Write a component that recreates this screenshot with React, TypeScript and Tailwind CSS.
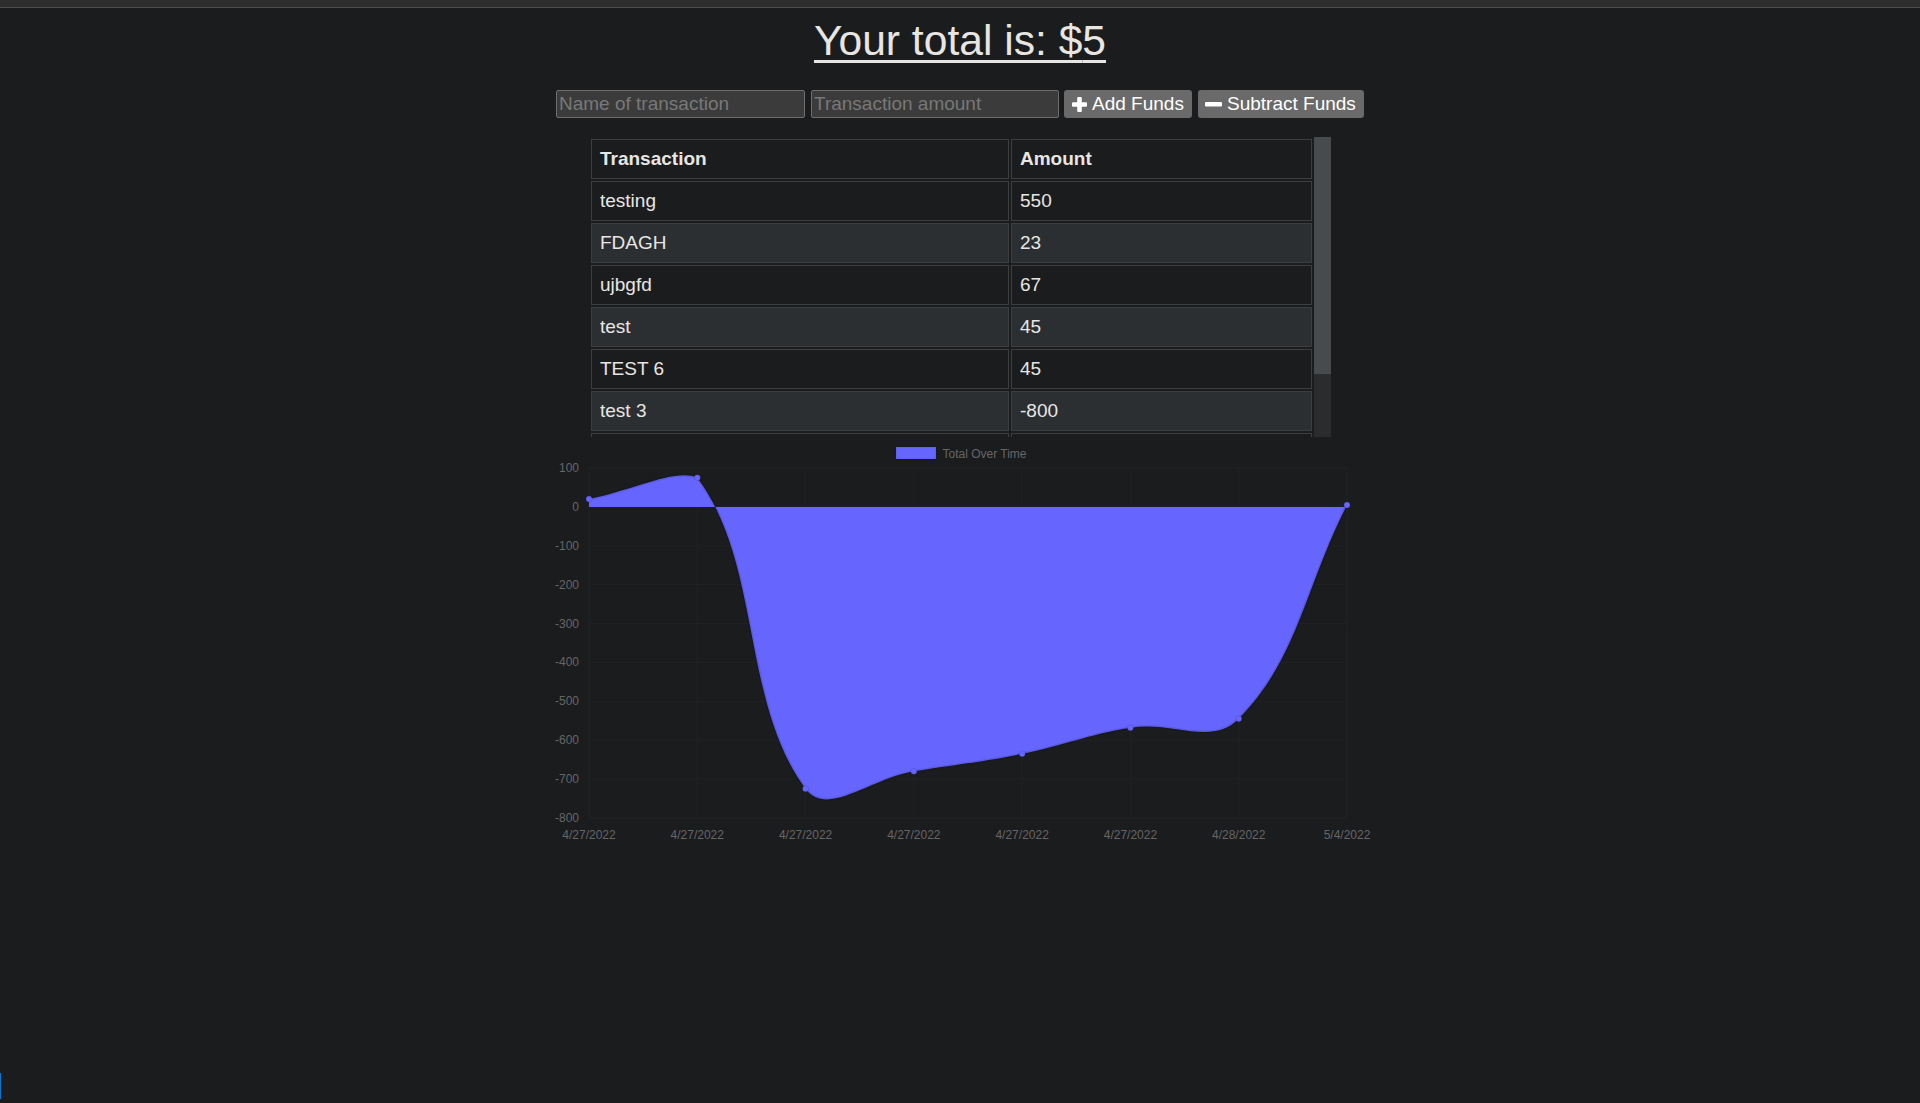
import React from "react";

type Transaction = { name: string; value: number; date: string };

// newest first, as the table lists them
const transactions: Transaction[] = [
  { name: "testing", value: 550, date: "5/4/2022" },
  { name: "FDAGH", value: 23, date: "4/28/2022" },
  { name: "ujbgfd", value: 67, date: "4/27/2022" },
  { name: "test", value: 45, date: "4/27/2022" },
  { name: "TEST 6", value: 45, date: "4/27/2022" },
  { name: "test 3", value: -800, date: "4/27/2022" },
  { name: "coffee", value: 55, date: "4/27/2022" },
  { name: "start", value: 20, date: "4/27/2022" },
];

const FONT = { fontFamily: '"Liberation Sans", Arial, sans-serif' };

function PlusIcon() {
  return (
    <svg viewBox="0 0 15 15" className="h-[15px] w-[15px] fill-current">
      <rect x="5.2" y="0" width="4.6" height="15" rx="1" />
      <rect x="0" y="5.2" width="15" height="4.6" rx="1" />
    </svg>
  );
}

function MinusIcon() {
  return (
    <svg viewBox="0 0 17 5" className="h-[5px] w-[17px] fill-current">
      <rect x="0" y="0" width="17" height="4.6" rx="1" />
    </svg>
  );
}

type Pt = { x: number; y: number };

// chart.js v2 style spline (tension 0.4)
function controlPoints(pts: Pt[], area: { l: number; r: number; t: number; b: number }) {
  const cap = (p: Pt) => ({
    x: Math.min(Math.max(p.x, area.l), area.r),
    y: Math.min(Math.max(p.y, area.t), area.b),
  });
  return pts.map((cur, i) => {
    const prev = pts[Math.max(0, i - 1)];
    const next = pts[Math.min(pts.length - 1, i + 1)];
    const d01 = Math.hypot(cur.x - prev.x, cur.y - prev.y);
    const d12 = Math.hypot(next.x - cur.x, next.y - cur.y);
    let s01 = d01 / (d01 + d12);
    let s12 = d12 / (d01 + d12);
    if (isNaN(s01)) s01 = 0;
    if (isNaN(s12)) s12 = 0;
    const fa = 0.4 * s01;
    const fb = 0.4 * s12;
    return {
      before: cap({ x: cur.x - fa * (next.x - prev.x), y: cur.y - fa * (next.y - prev.y) }),
      after: cap({ x: cur.x + fb * (next.x - prev.x), y: cur.y + fb * (next.y - prev.y) }),
    };
  });
}

function TotalChart() {
  const area = { l: 49, r: 807, t: 31, b: 381 };
  const yOf = (v: number) => area.t + ((100 - v) * (area.b - area.t)) / 900;
  const oldest = [...transactions].reverse();
  let sum = 0;
  const totals = oldest.map((t) => (sum += t.value));
  const step = (area.r - area.l) / (totals.length - 1);
  const pts = totals.map((v, i) => ({ x: area.l + i * step, y: yOf(v) }));
  const cps = controlPoints(pts, area);

  let line = `M${pts[0].x},${pts[0].y}`;
  for (let i = 1; i < pts.length; i++) {
    const a = cps[i - 1].after;
    const b = cps[i].before;
    line += ` C${a.x},${a.y} ${b.x},${b.y} ${pts[i].x},${pts[i].y}`;
  }
  const zero = yOf(0);
  const fill = `${line} L${pts[pts.length - 1].x},${zero} L${pts[0].x},${zero} Z`;
  const ticks = [100, 0, -100, -200, -300, -400, -500, -600, -700, -800];

  return (
    <svg width={840} height={413} viewBox="0 0 840 413" className="block" style={FONT}>
      {/* legend */}
      <rect x={356} y={10} width={40} height={12} fill="#6666ff" stroke="rgba(0,0,0,0.1)" />
      <text x={402.5} y={20.5} fontSize={12} fill="#666">
        Total Over Time
      </text>

      {/* grid */}
      {ticks.map((t) => (
        <line key={t} x1={area.l} x2={area.r} y1={yOf(t)} y2={yOf(t)} stroke="#212225" strokeWidth={1} />
      ))}
      {pts.map((p, i) => (
        <line key={i} x1={p.x} x2={p.x} y1={area.t} y2={area.b} stroke="#212225" strokeWidth={1} />
      ))}

      <path d={fill} fill="#6666ff" />
      <path d={line} fill="none" stroke="rgba(0,0,0,0.1)" strokeWidth={3} />
      {pts.map((p, i) => (
        <circle key={i} cx={p.x} cy={p.y} r={3} fill="#6666ff" stroke="rgba(0,0,0,0.1)" />
      ))}

      {/* y labels */}
      {ticks.map((t) => (
        <text key={t} x={39} y={yOf(t) + 4} fontSize={12} fill="#666" textAnchor="end">
          {t}
        </text>
      ))}
      {/* x labels */}
      {oldest.map((t, i) => (
        <text key={i} x={pts[i].x} y={402} fontSize={12} fill="#666" textAnchor="middle">
          {t.date}
        </text>
      ))}
    </svg>
  );
}

export default function App() {
  const total = transactions.reduce((a, t) => a + t.value, 0);

  return (
    <div className="relative min-h-screen bg-[#1b1c1e] text-[#e8e6e3]" style={FONT}>
      <div className="h-[8px] border-b border-[#4d4d4d] bg-[#2d2d2d]" />

      <h1 className="mt-[8px] text-center text-[42.6px] leading-[49px] underline decoration-[3px] underline-offset-[5px]">
        Your total is: ${total}
      </h1>

      <form className="mt-[25px] flex justify-center gap-[5px]" onSubmit={(e) => e.preventDefault()}>
        <input
          type="text"
          placeholder="Name of transaction"
          className="h-[28px] w-[249px] rounded-[2px] border border-[#6e6e6e] bg-[#3b3b3b] px-[2px] text-[19px] text-[#e8e6e3] placeholder:text-[#787878] outline-none"
        />
        <input
          type="number"
          placeholder="Transaction amount"
          className="ml-[1px] h-[28px] w-[248px] rounded-[2px] border border-[#6e6e6e] bg-[#3b3b3b] px-[2px] text-[19px] text-[#e8e6e3] placeholder:text-[#787878] outline-none"
        />
        <button
          type="button"
          className="flex h-[28px] w-[128px] items-center gap-[5px] rounded-[3px] bg-[#6a6a6a] pl-[8px] text-[19px] text-white"
        >
          <PlusIcon />
          <span>Add Funds</span>
        </button>
        <button
          type="button"
          className="ml-[1px] flex h-[28px] w-[166px] items-center gap-[5px] rounded-[3px] bg-[#6a6a6a] pl-[7px] text-[19px] text-white"
        >
          <MinusIcon />
          <span>Subtract Funds</span>
        </button>
      </form>

      <div className="mx-auto mt-[19px] flex h-[300px] w-[742px]">
        <div className="h-full w-[725px] overflow-hidden">
          <table className="w-full border-separate border-spacing-[2px] text-[19px]">
            <thead>
              <tr>
                <th className="h-[40px] w-[418px] border border-[#3c3e40] px-[8px] text-left font-bold">Transaction</th>
                <th className="h-[40px] border border-[#3c3e40] px-[8px] text-left font-bold">Amount</th>
              </tr>
            </thead>
            <tbody>
              {transactions.map((t, i) => (
                <tr key={i} className={i % 2 === 1 ? "bg-[#2c2f32]" : ""}>
                  <td className="h-[40px] border border-[#3c3e40] px-[8px]">{t.name}</td>
                  <td className="h-[40px] border border-[#3c3e40] px-[8px]">{t.value}</td>
                </tr>
              ))}
            </tbody>
          </table>
        </div>
        <div className="h-full w-[17px] bg-[#2a2c2e]">
          <div className="h-[237px] bg-[#484b4e]" />
        </div>
      </div>

      <div className="mx-auto w-[840px]">
        <TotalChart />
      </div>

      <div className="absolute bottom-[4px] left-0 h-[26px] w-[1px] bg-[#0078d4]" />
    </div>
  );
}
